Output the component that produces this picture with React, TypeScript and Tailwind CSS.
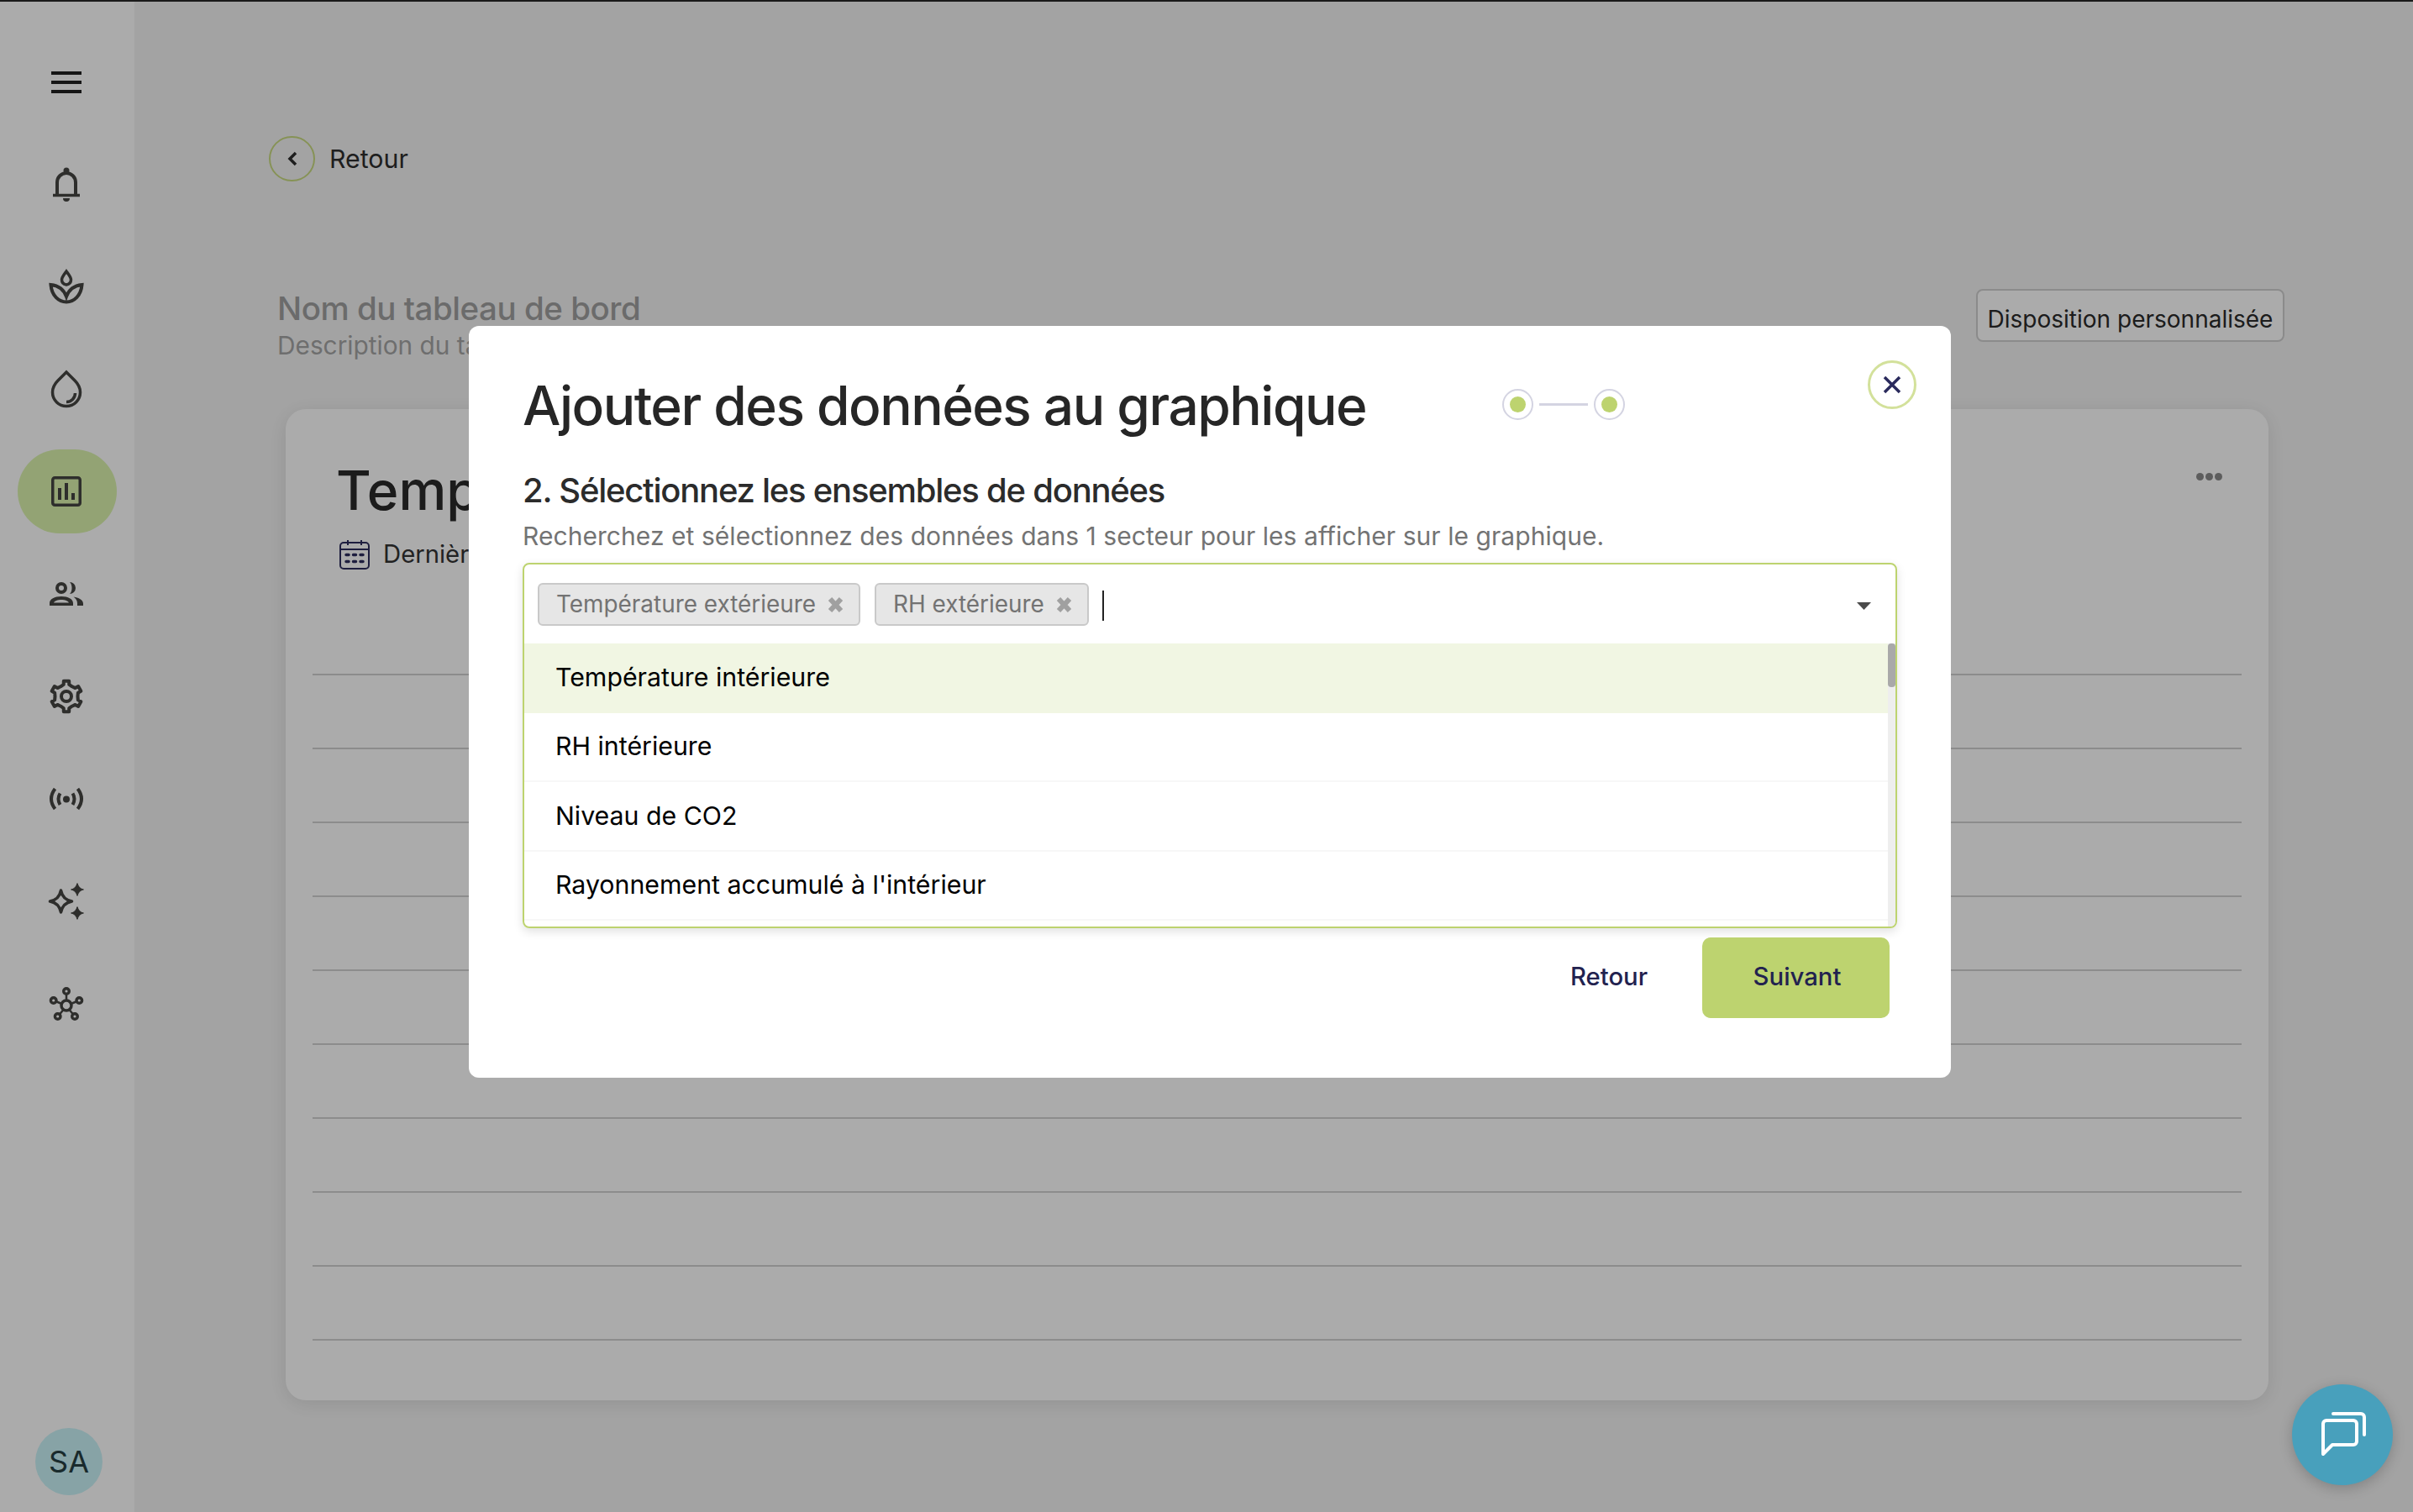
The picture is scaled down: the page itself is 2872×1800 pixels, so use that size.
import { ReactNode } from "react";

const ICON_DARK = "#454542";

const Icon = ({ children }: { children: ReactNode }) => (
  <svg width="48" height="48" viewBox="0 0 48 48" fill="none" stroke={ICON_DARK} strokeWidth="3.5">
    {children}
  </svg>
);

// six tooth gear, same shape as the settings icon in the rail
const gearPath = () => {
  const pts: string[] = [];
  for (let i = 0; i < 6; i++) {
    const a = -90 + i * 60;
    const list: [number, number][] = [
      [a - 30, 13.5],
      [a - 13, 14.5],
      [a - 10, 18.5],
      [a + 10, 18.5],
      [a + 13, 14.5],
    ];
    list.forEach(([deg, r]) => {
      const rad = (deg * Math.PI) / 180;
      pts.push(`${(24 + r * Math.cos(rad)).toFixed(2)} ${(24 + r * Math.sin(rad)).toFixed(2)}`);
    });
  }
  return `M${pts.join("L")}Z`;
};

const star = (x: number, y: number, r: number) => {
  const c = r * 0.16;
  return `M${x} ${y - r}Q${x + c} ${y - c} ${x + r} ${y}Q${x + c} ${y + c} ${x} ${y + r}Q${x - c} ${y + c} ${x - r} ${y}Q${x - c} ${y - c} ${x} ${y - r}Z`;
};

const railItems: { key: string; active?: boolean; shift?: string; icon: ReactNode }[] = [
  {
    key: "menu",
    icon: (
      <div className="flex w-[36px] flex-col gap-[7px]">
        <div className="h-[4px] bg-[#222222]" />
        <div className="h-[4px] bg-[#222222]" />
        <div className="h-[4px] bg-[#222222]" />
      </div>
    ),
  },
  {
    key: "bell",
    icon: (
      <Icon>
        <path d="M8 36.5H40" strokeWidth="3.5" />
        <path d="M13 36V21a11 11 0 0 1 22 0V36" strokeWidth="4" />
        <circle cx="24" cy="7" r="3.5" fill={ICON_DARK} stroke="none" />
        <path d="M20 40h8a4 4 0 0 1-8 0z" fill={ICON_DARK} stroke="none" />
      </Icon>
    ),
  },
  {
    key: "plant",
    icon: (
      <Icon>
        <path d="M24 5C21 9 18.5 12 18.5 15C18.5 18.5 21 20.5 24 21C27 20.5 29.5 18.5 29.5 15C29.5 12 27 9 24 5Z" strokeWidth="3.5" />
        <path d="M5.5 21C6.5 34 15 41.5 24 41.5C33 41.5 41.5 34 42.5 21C33 22 27 27 24 35C21 27 15 22 5.5 21Z" strokeWidth="4" />
      </Icon>
    ),
  },
  {
    key: "drop",
    icon: (
      <Icon>
        <path d="M24 4L34 14C38 18 40.5 23 40.5 28A16.5 16.5 0 0 1 7.5 28C7.5 23 10 18 14 14Z" />
        <path d="M24 39.5A10.5 10.5 0 0 0 34.5 29" />
      </Icon>
    ),
  },
  {
    key: "chart",
    active: true,
    icon: (
      <Icon>
        <rect x="7.75" y="7.75" width="32.5" height="32.5" rx="2.5" />
        <path d="M14 20h4v14h-4zM22 14h4v20h-4zM30 26h4v8h-4z" fill={ICON_DARK} stroke="none" />
      </Icon>
    ),
  },
  {
    key: "users",
    icon: (
      <Icon>
        <circle cx="18" cy="17" r="5" strokeWidth="4" />
        <path d="M28 10a7 7 0 0 1 0 14c2-2 2.500-4.500 2.500-7s-.5-5-2.500-7z" fill={ICON_DARK} stroke="none" />
        <path
          fillRule="evenodd"
          d="M4 38v-3c0-5 6-8 14-8s14 3 14 8v3zM9 34.500h18c-1-2-4.500-3.500-9-3.500s-8 1.500-9 3.500z"
          fill={ICON_DARK}
          stroke="none"
        />
        <path d="M32.500 27.500c6 1 11.500 3.500 11.500 8v2.500h-7v-3c0-3-2-6-4.500-7.500z" fill={ICON_DARK} stroke="none" />
      </Icon>
    ),
  },
  {
    key: "settings",
    icon: (
      <Icon>
        <path d={gearPath()} strokeLinejoin="round" strokeWidth="4" />
        <circle cx="24" cy="24" r="6" strokeWidth="4" />
      </Icon>
    ),
  },
  {
    key: "signal",
    icon: (
      <Icon>
        <circle cx="24" cy="24.500" r="4" fill={ICON_DARK} stroke="none" />
        <path d="M10.500 12Q1.500 24 10.500 36M37.500 12Q46.500 24 37.500 36M16.500 17.500Q12.500 24 16.500 31M31.500 17.500Q35.500 24 31.500 31" strokeWidth="4" />
      </Icon>
    ),
  },
  {
    key: "sparkles",
    shift: "pt-[4px]",
    icon: (
      <Icon>
        <path d={star(17.5, 23, 13)} strokeWidth="3.6" strokeLinejoin="round" />
        <path d={star(37, 9, 7.500)} fill={ICON_DARK} stroke={ICON_DARK} strokeWidth="1.2" />
        <path d={star(37, 37, 7.500)} fill={ICON_DARK} stroke={ICON_DARK} strokeWidth="1.2" />
      </Icon>
    ),
  },
  {
    key: "network",
    shift: "pt-[6px]",
    icon: (
      <Icon>
        <circle cx="24" cy="24" r="6" />
        <path d="M24 18V11M29.500 22L35.500 19.500M18.500 22L12.500 19.500M20.500 29L16 34.500M27.500 29L32 34.500" strokeWidth="2.500" />
        <circle cx="24" cy="7" r="3.300" strokeWidth="3.400" />
        <circle cx="39.300" cy="18" r="3.300" strokeWidth="3.400" />
        <circle cx="8.700" cy="18" r="3.300" strokeWidth="3.400" />
        <circle cx="13.700" cy="37" r="3.300" strokeWidth="3.400" />
        <circle cx="34" cy="37" r="3.300" strokeWidth="3.400" />
      </Icon>
    ),
  },
];

const Sidebar = () => (
  <aside className="flex h-full w-[160px] shrink-0 flex-col items-center bg-white pt-[48px]">
    <nav className="flex flex-col items-center gap-[21.800px]">
      {railItems.map((item) => (
        <div
          key={item.key}
          className={`flex h-[100px] w-[118px] items-center justify-center rounded-full pr-[2px] ${
            item.active ? "bg-[#dbf4ae]" : ""
          } ${item.shift ?? ""}`}
        >
          {item.icon}
        </div>
      ))}
    </nav>
    <div className="mt-auto mb-[20px] ml-[4px] flex h-[80px] w-[80px] items-center justify-center rounded-full bg-[#c9f3f8] text-[36px] text-[#263f42]">
      SA
    </div>
  </aside>
);

const CalendarIcon = () => (
  <svg width="36" height="36" viewBox="0 0 36 36" fill="none" stroke="#2e2e5e" strokeWidth="2">
    <rect x="1" y="4" width="34" height="31" rx="4" />
    <path d="M1 12H35M10 1V7M26 1V7" />
    <path d="M8 18.500h3M16.500 18.500h3M25 18.500h3M8 26.500h3M16.500 26.500h3M25 26.500h3" strokeWidth="3.500" strokeLinecap="round" />
  </svg>
);

const Dashboard = () => (
  <main className="flex h-full flex-1 flex-col bg-[#f4f4f4] pt-[162px]">
    <div className="ml-[160px] flex items-center gap-[17px]">
      <div className="flex h-[54px] w-[55px] items-center justify-center rounded-full border-2 border-[#c8da80]">
        <svg width="14" height="18" viewBox="0 0 14 18" fill="none" stroke="#2e2e2e" strokeWidth="3.500">
          <path d="M11 2L4 9L11 16" />
        </svg>
      </div>
      <span className="-mt-[1px] text-[30.300px] leading-[40px] text-[#2e2e2e]">Retour</span>
    </div>

    <div className="mt-[127px] flex items-start justify-between pr-[153px] pl-[170px]">
      <div>
        <div className="text-[38.500px] leading-[48px] font-medium tracking-[-0.47px] text-[#a0a0a0]">
          Nom du tableau de bord
        </div>
        <div className="text-[29.800px] leading-[40px] text-[#a5a5a5]">Description du tableau de bord</div>
      </div>
      <button className="mt-[1px] h-[63px] w-[367px] rounded-[8px] border-2 border-[#cfcfcf] bg-white pt-[8px] text-[28px] text-[#2a2a2a]">
        Disposition personnalisée
      </button>
    </div>

    <section className="mt-[56px] ml-[180px] h-[1180px] w-[2360px] rounded-[24px] bg-white px-[32px] pt-[65px] shadow-[0_4px_24px_rgba(0,0,0,0.1)]">
      <div className="flex items-start justify-between pr-[23px] pl-[28px]">
        <div className="text-[64px] leading-[64px] font-medium text-[#2a2a2a]">Température</div>
        <div className="mt-[11px] flex gap-[2px]">
          <div className="h-[9px] w-[9px] rounded-full bg-[#8b8b8b]" />
          <div className="h-[9px] w-[9px] rounded-full bg-[#8b8b8b]" />
          <div className="h-[9px] w-[9px] rounded-full bg-[#8b8b8b]" />
        </div>
      </div>
      <div className="mt-[24px] flex items-center gap-[16px] pl-[32px]">
        <CalendarIcon />
        <span className="text-[29.300px] leading-[40px] text-[#333333]">Dernières 24 heures</span>
      </div>
      <div className="mt-[122px] flex flex-col gap-[86px]">
        {Array.from({ length: 10 }).map((_, i) => (
          <div key={i} className="h-[2px] w-full bg-[#d1d1d1]" />
        ))}
      </div>
    </section>
  </main>
);

const Tag = ({ label }: { label: string }) => (
  <div className="flex h-[51px] items-center gap-[14px] rounded-[6px] border-2 border-[#c9c9c9] bg-[#e6e6e6] pr-[18px] pl-[20px]">
    <span className="text-[27.900px] leading-none text-[#737373]">{label}</span>
    <svg width="19" height="20" viewBox="0 0 19 20" stroke="#a0a0a0" strokeWidth="6">
      <path d="M3 3L16 17M16 3L3 17" />
    </svg>
  </div>
);

const options = [
  "Température intérieure",
  "RH intérieure",
  "Niveau de CO2",
  "Rayonnement accumulé à l'intérieur",
];

const DataModal = () => (
  <div className="absolute top-[388px] left-[558px] h-[895px] w-[1764px] rounded-[12px] bg-white pt-[63px] pl-[64px]">
    <div className="flex items-center">
      <h2 className="w-[1166px] text-[64px] leading-[64px] font-medium tracking-[-1.5px] text-[#262626]">
        Ajouter des données au graphique
      </h2>
      <div className="mb-[4px] flex items-center gap-[7px]">
        <div className="flex h-[37px] w-[37px] items-center justify-center rounded-full border-2 border-[#d4d4e2]">
          <div className="h-[19px] w-[19px] rounded-full bg-[#bdd36f]" />
        </div>
        <div className="h-[3px] w-[58px] bg-[#d4d4e2]" />
        <div className="flex h-[37px] w-[37px] items-center justify-center rounded-full border-2 border-[#d4d4e2]">
          <div className="h-[19px] w-[19px] rounded-full bg-[#bdd36f]" />
        </div>
      </div>
    </div>

    <button className="absolute top-[41px] right-[41px] flex h-[58px] w-[58px] items-center justify-center rounded-full border-[3px] border-[#d3e19b]">
      <svg width="24" height="24" viewBox="0 0 24 24" stroke="#2a2a5c" strokeWidth="3.500">
        <path d="M3 3L21 21M21 3L3 21" />
      </svg>
    </button>

    <h3 className="mt-[45px] text-[40px] leading-[48px] font-medium tracking-[-1.24px] text-[#2b2b2b]">
      2. Sélectionnez les ensembles de données
    </h3>
    <p className="mt-[12px] text-[30px] leading-[36px] tracking-[0.05px] text-[#737373]">
      Recherchez et sélectionnez des données dans 1 secteur pour les afficher sur le graphique.
    </p>

    <div className="mt-[14px] flex h-[435px] w-[1636px] flex-col overflow-hidden rounded-[8px] border-2 border-[#bdd36f] shadow-[0_4px_12px_rgba(0,0,0,0.12)]">
      <div className="flex h-[94px] shrink-0 items-start gap-[17px] pt-[22px] pr-[29px] pl-[16px]">
        <Tag label="Température extérieure" />
        <Tag label="RH extérieure" />
        <div className="-ml-[1px] mt-[9px] h-[36px] w-[2px] bg-[#222222]" />
        <svg className="mt-[23px] ml-auto" width="17" height="9" viewBox="0 0 17 9" fill="#4a4a4a">
          <path d="M0 0H17L8.500 9Z" />
        </svg>
      </div>
      <div className="flex min-h-0 flex-1">
        <ul className="flex-1">
          {options.map((label, i) => (
            <li
              key={label}
              className={`flex h-[82.500px] items-center border-b-2 pl-[37px] text-[30.300px] text-black ${
                i === 0 ? "border-transparent bg-[#f1f6e3]" : "border-[#f7f7f7]"
              }`}
            >
              {label}
            </li>
          ))}
        </ul>
        <div className="w-[9px] bg-[#eeeeee]">
          <div className="h-[52px] rounded-[4px] bg-[#a9a9a9]" />
        </div>
      </div>
    </div>

    <div className="mt-[11px] flex w-[1627px] items-center justify-end gap-[31px]">
      <button className="h-[96px] w-[160px] pb-[2px] text-[29.300px] font-medium text-[#22224f]">Retour</button>
      <button className="h-[96px] w-[223px] rounded-[10px] bg-[#bdd36f] pb-[2px] pl-[3px] text-[29.300px] font-medium text-[#22224f]">
        Suivant
      </button>
    </div>
  </div>
);

export default function App() {
  return (
    <div className="relative flex h-[1800px] w-[2872px] overflow-hidden [font-family:Inter,sans-serif]">
      <Sidebar />
      <Dashboard />
      <div className="absolute inset-0 border-t-2 border-[#1a1a1a] bg-black/33" />
      <DataModal />
      <button className="absolute top-[1648px] left-[2728px] flex h-[120px] w-[120px] items-center justify-center rounded-full bg-[#48a0bc] shadow-[0_4px_16px_rgba(0,0,0,0.2)]">
        <svg width="120" height="120" viewBox="0 0 120 120" fill="none" stroke="white" strokeWidth="4" strokeLinecap="round" strokeLinejoin="round">
          <path d="M37 83V47a4 4 0 0 1 4-4H73a4 4 0 0 1 4 4V68a4 4 0 0 1-4 4H48Z" />
          <path d="M49 35H82a4 4 0 0 1 4 4V60" />
        </svg>
      </button>
    </div>
  );
}
